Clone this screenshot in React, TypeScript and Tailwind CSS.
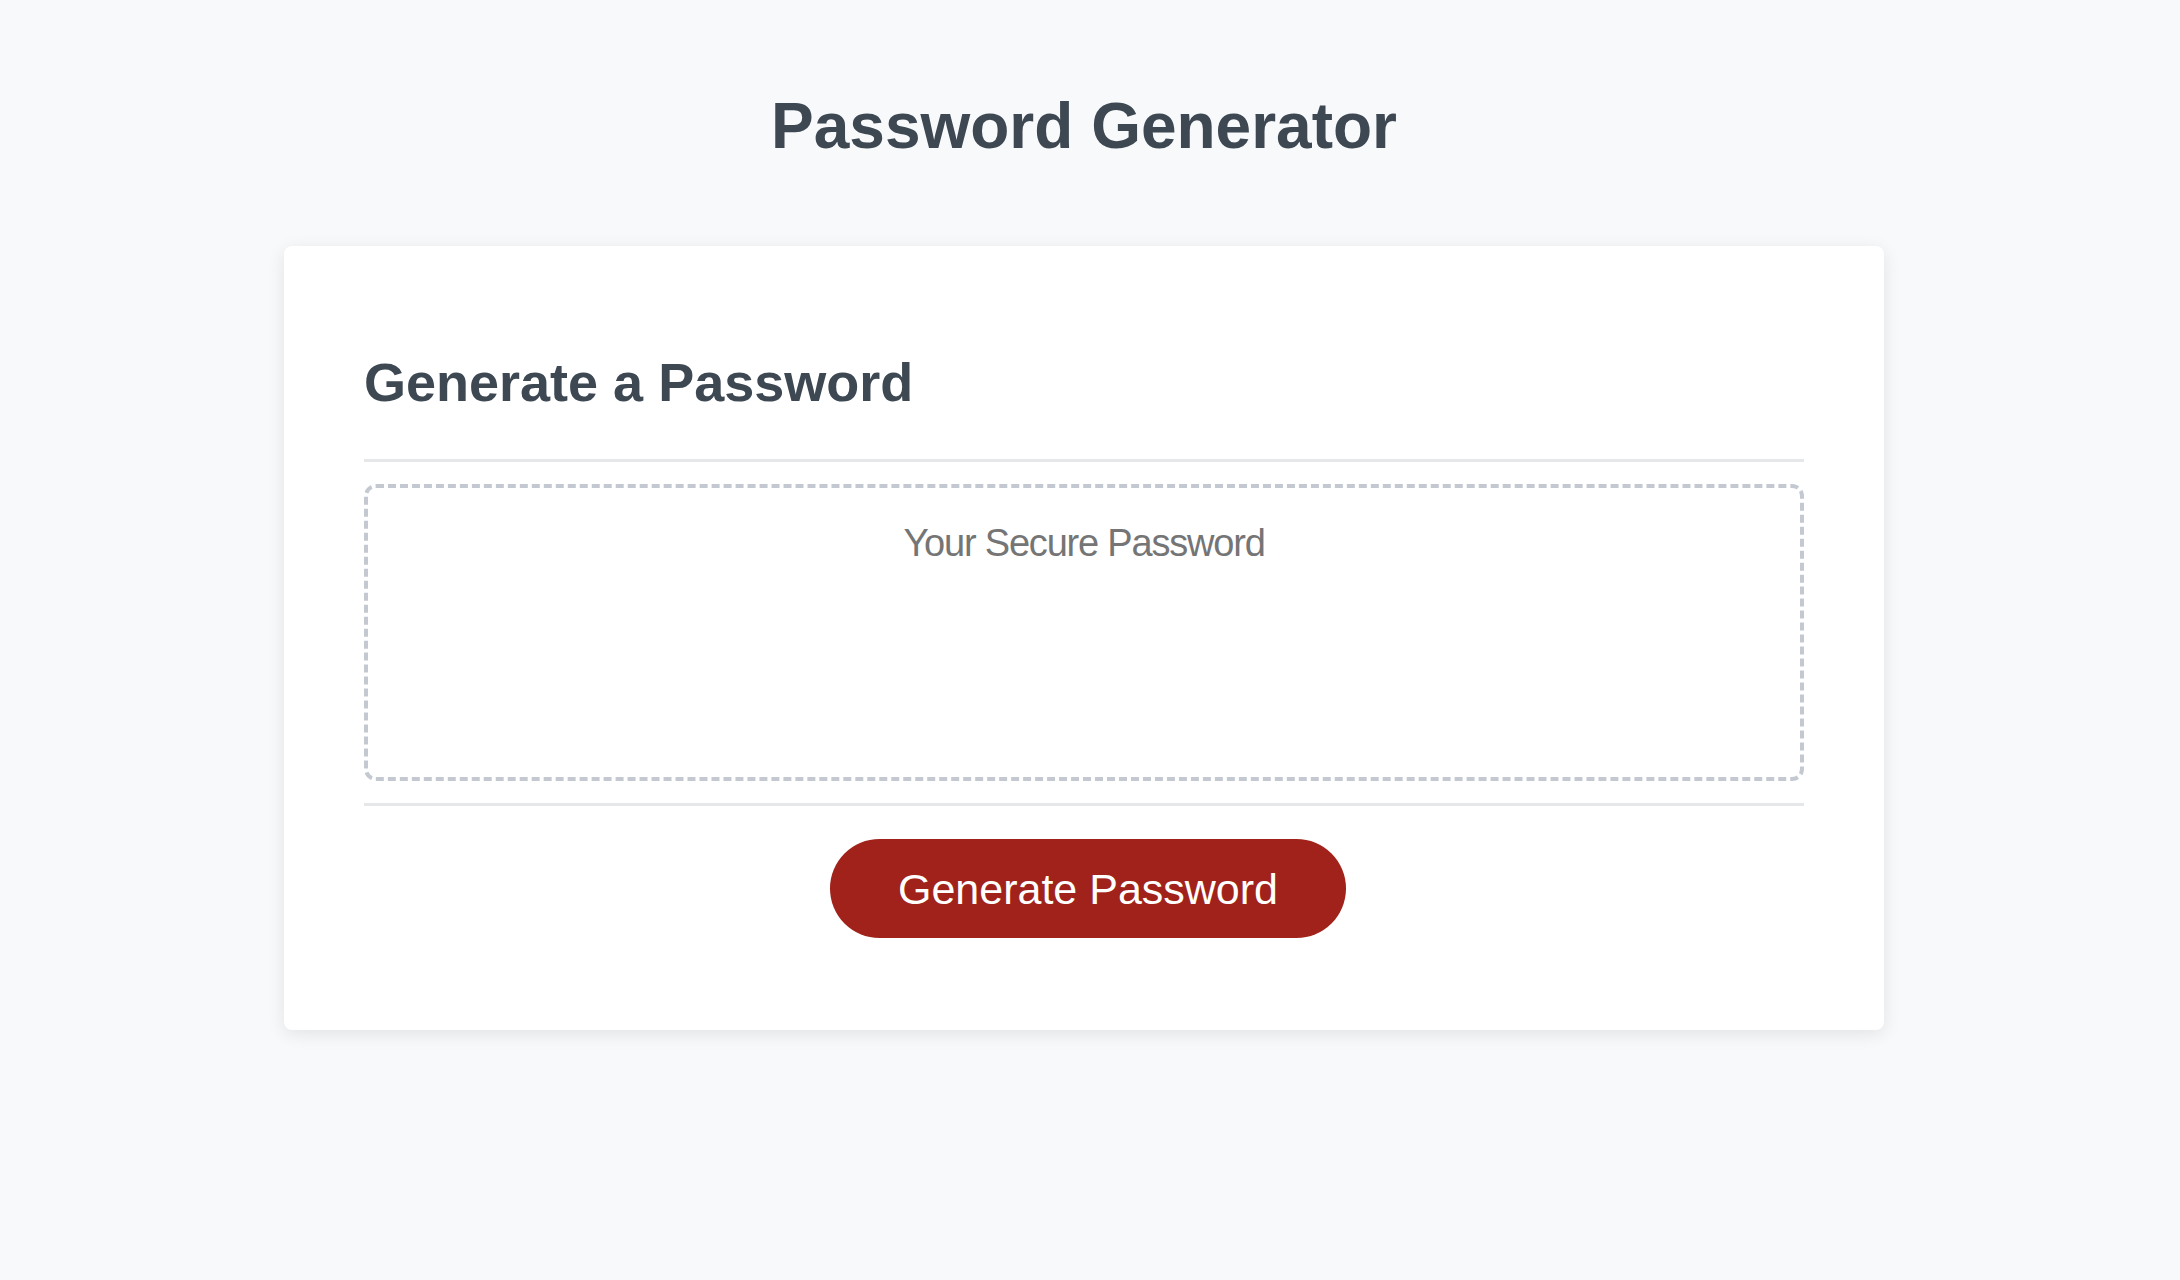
import React from "react";

export default function App() {
  return (
    <div className="min-h-screen w-full bg-[#f8f9fb]" style={{ fontFamily: '"Liberation Sans", Arial, sans-serif' }}>
      <div className="w-[2168px] flex flex-col items-center">
        <h1 className="mt-[89px] text-[64px] leading-[74px] font-bold text-[#3d4852]">Password Generator</h1>
        <div className="mt-[83px] w-[1600px] rounded-lg bg-white px-[80px] pt-[104px] pb-[92px] shadow-[0_4px_18px_rgba(0,0,0,0.09)]">
          <h2 className="text-[54px] leading-[64px] font-bold text-[#3d4852]">Generate a Password</h2>
          <div className="mt-[45px] h-[3px] bg-[#e6e7e9]" />
          <div className="mt-[22px] h-[297px] rounded-[12px] border-[4px] border-dashed border-[#c4c9d1] pt-[33px] text-center">
            <div className="text-[38px] leading-[44px] tracking-[-1.2px] text-[#757575]">Your Secure Password</div>
          </div>
          <div className="mt-[22px] h-[3px] bg-[#e6e7e9]" />
          <div className="mt-[33px] flex justify-center">
            <button className="ml-[8px] h-[99px] w-[516px] rounded-full bg-[#a0221a] text-[43px] leading-[50px] text-white flex items-center justify-center">
              Generate Password
            </button>
          </div>
        </div>
      </div>
    </div>
  );
}
